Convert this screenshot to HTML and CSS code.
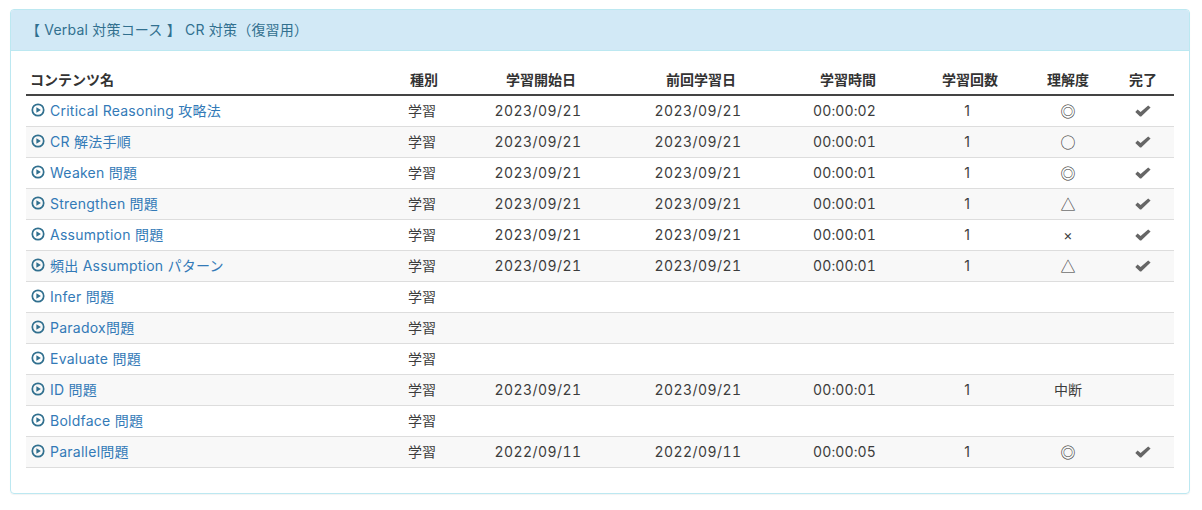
FILE: index.html
```html
<!DOCTYPE html>
<html lang="ja">
<head>
<meta charset="utf-8">
<title>CR 対策</title>
<link rel="stylesheet" href="styles.css">
</head>
<body>
<svg class="defs" width="0" height="0" aria-hidden="true">
  <symbol id="play" viewBox="0 0 14 14">
    <circle cx="7" cy="7" r="5.7" fill="none" stroke="currentColor" stroke-width="1.7"/>
    <path d="M5.4 4.2 L9.9 7 L5.4 9.8 Z" fill="currentColor"/>
  </symbol>
  <symbol id="ok" viewBox="0 0 16 14">
    <path d="M0.3 8 L2.6 5.6 L5.6 8 L13.2 1.6 L15.6 3.6 L6.2 12.6 L5 12.6 Z" fill="currentColor"/>
  </symbol>
</svg>
<section class="panel">
  <h3 class="panel-heading">【 Verbal 対策コース 】 CR 対策（復習用）</h3>
  <div class="panel-body">
    <table class="grid">
      <colgroup>
        <col class="c-name"><col class="c-type"><col class="c-date"><col class="c-date"><col class="c-time"><col class="c-count"><col class="c-level"><col class="c-done">
      </colgroup>
      <thead>
        <tr><th class="left">コンテンツ名</th><th class="h-type">種別</th><th class="h-date">学習開始日</th><th class="h-date">前回学習日</th><th class="h-time">学習時間</th><th class="h-count">学習回数</th><th>理解度</th><th>完了</th></tr>
      </thead>
      <tbody>
        <tr><td class="left"><a href="#"><svg class="play"><use href="#play"/></svg>Critical Reasoning 攻略法</a></td><td class="type">学習</td><td class="date">2023/09/21</td><td class="date">2023/09/21</td><td class="time">00:00:02</td><td>1</td><td><span class="sym">◎</span></td><td><svg class="ok"><use href="#ok"/></svg></td></tr>
        <tr><td class="left"><a href="#"><svg class="play"><use href="#play"/></svg>CR 解法手順</a></td><td class="type">学習</td><td class="date">2023/09/21</td><td class="date">2023/09/21</td><td class="time">00:00:01</td><td>1</td><td><span class="sym">○</span></td><td><svg class="ok"><use href="#ok"/></svg></td></tr>
        <tr><td class="left"><a href="#"><svg class="play"><use href="#play"/></svg>Weaken 問題</a></td><td class="type">学習</td><td class="date">2023/09/21</td><td class="date">2023/09/21</td><td class="time">00:00:01</td><td>1</td><td><span class="sym">◎</span></td><td><svg class="ok"><use href="#ok"/></svg></td></tr>
        <tr><td class="left"><a href="#"><svg class="play"><use href="#play"/></svg>Strengthen 問題</a></td><td class="type">学習</td><td class="date">2023/09/21</td><td class="date">2023/09/21</td><td class="time">00:00:01</td><td>1</td><td><span class="sym">△</span></td><td><svg class="ok"><use href="#ok"/></svg></td></tr>
        <tr><td class="left"><a href="#"><svg class="play"><use href="#play"/></svg>Assumption 問題</a></td><td class="type">学習</td><td class="date">2023/09/21</td><td class="date">2023/09/21</td><td class="time">00:00:01</td><td>1</td><td>×</td><td><svg class="ok"><use href="#ok"/></svg></td></tr>
        <tr><td class="left"><a href="#"><svg class="play"><use href="#play"/></svg>頻出 Assumption パターン</a></td><td class="type">学習</td><td class="date">2023/09/21</td><td class="date">2023/09/21</td><td class="time">00:00:01</td><td>1</td><td><span class="sym">△</span></td><td><svg class="ok"><use href="#ok"/></svg></td></tr>
        <tr><td class="left"><a href="#"><svg class="play"><use href="#play"/></svg>Infer 問題</a></td><td class="type">学習</td><td></td><td></td><td></td><td></td><td></td><td></td></tr>
        <tr><td class="left"><a href="#"><svg class="play"><use href="#play"/></svg>Paradox問題</a></td><td class="type">学習</td><td></td><td></td><td></td><td></td><td></td><td></td></tr>
        <tr><td class="left"><a href="#"><svg class="play"><use href="#play"/></svg>Evaluate 問題</a></td><td class="type">学習</td><td></td><td></td><td></td><td></td><td></td><td></td></tr>
        <tr><td class="left"><a href="#"><svg class="play"><use href="#play"/></svg>ID 問題</a></td><td class="type">学習</td><td class="date">2023/09/21</td><td class="date">2023/09/21</td><td class="time">00:00:01</td><td>1</td><td>中断</td><td></td></tr>
        <tr><td class="left"><a href="#"><svg class="play"><use href="#play"/></svg>Boldface 問題</a></td><td class="type">学習</td><td></td><td></td><td></td><td></td><td></td><td></td></tr>
        <tr><td class="left"><a href="#"><svg class="play"><use href="#play"/></svg>Parallel問題</a></td><td class="type">学習</td><td class="date">2022/09/11</td><td class="date">2022/09/11</td><td class="time">00:00:05</td><td>1</td><td><span class="sym">◎</span></td><td><svg class="ok"><use href="#ok"/></svg></td></tr>
      </tbody>
    </table>
  </div>
</section>
</body>
</html>
```

FILE: styles.css
```css
* { box-sizing: border-box; }
html, body { background: #fff; }
body {
  margin: 0;
  padding: 9px 12px 16px 10px;
  font-family: Inter, "Noto Sans CJK JP", sans-serif;
  font-size: 14px;
  line-height: 20px;
  color: #3c3c3c;
}
.defs { display: block; height: 0; }
.panel {
  border: 1px solid #bce8f1;
  border-radius: 4px;
  box-shadow: 0 1px 1px rgba(0,0,0,.05);
}
.panel-heading {
  margin: 0;
  padding: 10px 15px;
  height: 41px;
  font-size: 14px;
  font-weight: 400;
  line-height: 20px;
  letter-spacing: .2px;
  color: #31708f;
  background: #d2e9f6;
  border-bottom: 1px solid #bce8f1;
  border-radius: 3px 3px 0 0;
}
.panel-body { padding: 14px 15px 25px; }
.grid { width: 100%; border-collapse: collapse; table-layout: fixed; }
.c-name { width: 362px; }
.c-type { width: 70px; }
.c-date { width: 160px; }
.c-time { width: 132px; }
.c-count { width: 114px; }
.c-level { width: 88px; }
.c-done { width: 62px; }
th, td { padding: 5px; text-align: center; font-weight: 400; vertical-align: top; }
th { font-weight: 700; border-bottom: 2px solid #444; height: 30px; padding-bottom: 3px; color: #333; }
td { border-bottom: 1px solid #ddd; height: 31px; }
tbody tr:nth-child(even) td { background: #f8f8f8; }
th.left { padding-left: 4px; text-align: left; }
td.left { text-align: left; }
.h-type { padding-left: 7px; }
.h-date { padding-left: 11px; }
.h-time { padding-left: 13px; }
.h-count { padding-left: 11px; }
td.type { padding-right: 7px; }
td.date { letter-spacing: .45px; font-variant-numeric: tabular-nums; }
td.time { letter-spacing: .1px; padding-left: 6px; font-variant-numeric: tabular-nums; }
.sym { display: inline-block; height: 20px; vertical-align: top; font-size: 15px; line-height: 20px; color: #333; font-family: "Noto Sans CJK JP", sans-serif; }
a { color: #337ab7; text-decoration: none; letter-spacing: .25px; }
.play { width: 14px; height: 14px; margin-right: 5px; vertical-align: -1px; color: #31708f; }
.ok { width: 16px; height: 14px; vertical-align: -2px; color: #666; }
```
